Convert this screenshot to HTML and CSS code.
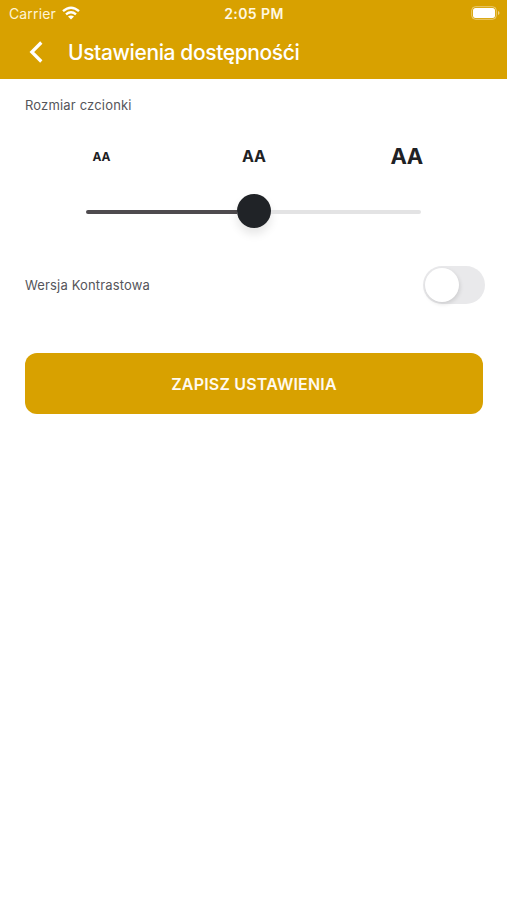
FILE: index.html
```html
<!DOCTYPE html>
<html lang="pl">
<head>
<meta charset="utf-8">
<title>Ustawienia</title>
<link rel="stylesheet" href="styles.css">
</head>
<body>
<header class="header">
  <div class="status">
    <div class="carrier"><span>Carrier</span>
      <svg class="wifi" width="18" height="14" viewBox="0 0 18 14" fill="none" stroke="#fff" stroke-width="2.4"><path d="M1 5.1Q9-1.8 17 5.1M4 8.3Q9 4 14 8.3"/><path d="M6 10.5Q9 8.3 12 10.5L9 13.6Z" fill="#fff" stroke="none"/></svg>
    </div>
    <div class="time">2:05 PM</div>
    <div class="power">
      <svg width="29" height="14" viewBox="0 0 29 14"><rect x=".7" y=".7" width="24.6" height="12.6" rx="3.8" fill="none" stroke="#fff" stroke-opacity=".45"/><rect x="2" y="2" width="22" height="10" rx="2.5" fill="#fff"/><path d="M27 5v4q1.5-.6 1.5-2T27 5" fill="#fff" fill-opacity=".55"/></svg>
    </div>
  </div>
  <div class="bar">
    <svg class="back" width="14" height="22" viewBox="0 0 14 22" fill="none" stroke="#fff" stroke-width="3.2"><path d="M12.3 1.5 2.8 11l9.5 9.5"/></svg>
    <h1 class="title">Ustawienia dostępnośći</h1>
  </div>
</header>
<main class="content">
  <div class="label size-label">Rozmiar czcionki</div>
  <div class="sizes"><span class="small">AA</span><span class="medium">AA</span><span class="large">AA</span></div>
  <div class="slider"><div class="filled"></div><div class="thumb"></div><div class="rest"></div></div>
  <div class="contrast"><span class="label contrast-label">Wersja Kontrastowa</span><div class="toggle"><div class="knob"></div></div></div>
  <button class="save">ZAPISZ USTAWIENIA</button>
</main>
</body>
</html>
```
FILE: styles.css
```css
* { box-sizing: border-box; }
body { margin: 0; min-height: 900px; background: #fff; color: #202124; font-family: Inter, sans-serif; }
.header { height: 79px; background: #d8a100; color: #fff; }
.status { height: 27px; display: grid; grid-template-columns: 1fr auto 1fr; align-items: center; padding: 0 8px 0 9px; font-size: 14px; }
.carrier { display: flex; align-items: center; gap: 6px; letter-spacing: .14px; color: #fff4d6; }
.wifi { margin-top: -1px; }
.time { font-weight: 600; letter-spacing: .4px; color: #fff8e3; }
.power { display: flex; justify-content: flex-end; margin: -1px -1px 0 0; }
.bar { height: 50px; display: flex; align-items: center; padding-left: 29px; }
.title { margin: 2px 0 0 25px; font-size: 21px; line-height: 26px; font-weight: 500; letter-spacing: -.38px; white-space: nowrap; }
.content { padding: 16px 22px 0 25px; }
.label { font-size: 13px; line-height: 20px; color: #55555a; }
.size-label { letter-spacing: .17px; }
.sizes { display: grid; grid-template-columns: 153px 152px 153px; height: 30px; margin-top: 26px; align-items: center; text-align: center; font-weight: 700; }
.small { font-size: 12px; }
.medium { font-size: 16px; }
.large { font-size: 22px; letter-spacing: -.5px; }
.slider { width: 335px; height: 34px; margin: 23px 0 0 61px; display: flex; align-items: center; }
.filled { width: 151px; height: 4px; margin-top: 1px; border-radius: 2px 0 0 2px; background: #4e4b4e; }
.thumb { width: 34px; height: 34px; border-radius: 50%; background: #202327; box-shadow: 0 6px 10px rgba(0,0,0,.1); }
.rest { flex: 1; height: 4px; margin-top: 1px; border-radius: 0 2px 2px 0; background: #e3e3e4; }
.contrast { height: 38px; margin-top: 38px; display: flex; align-items: center; justify-content: space-between; }
.contrast-label { letter-spacing: .15px; }
.toggle { width: 62px; height: 38px; padding: 2px; border-radius: 19px; background: #e9e9eb; }
.knob { width: 34px; height: 34px; border-radius: 50%; background: #fff; box-shadow: 1px 2px 4px rgba(0,0,0,.12); }
.save { display: block; width: 458px; height: 61px; margin: 49px 0 0; padding: 0; border: 0; border-radius: 12px; background: #d8a100; color: #fffaf0; font: 600 16px/20px Inter, sans-serif; letter-spacing: .2px; }
```
